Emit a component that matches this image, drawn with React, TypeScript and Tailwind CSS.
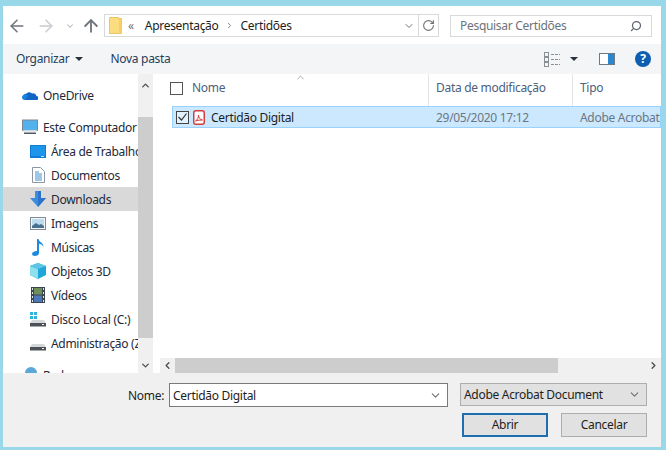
import { ArrowLeft, ArrowRight, ArrowUp, ChevronDown, ChevronLeft, ChevronRight, ChevronUp, RotateCw, Search } from "lucide-react";
import type { ReactNode } from "react";

function FolderIcon() {
  return (
    <svg width="13" height="17" viewBox="0 0 13 17">
      <path d="M0.500 0.500h9l0 1h3v15h-12z" fill="#fbdc7f" stroke="#e9c765" />
      <path d="M10 2h2.500v14.500H10z" fill="#f7cf66" />
    </svg>
  );
}

function CloudIcon() {
  return (
    <svg width="16" height="12" viewBox="0 0 16 12">
      <path d="M3 11h11a2 2 0 0 0 .5-4A3.600 3.600 0 0 0 10 4.500 4 4 0 0 0 4.500 4.500 3.500 3.500 0 0 0 3 11z" fill="#0f66c4" />
      <path d="M1 10.500a3 3 0 0 1 3-5l2 1-3 4.500z" fill="#1a84dc" />
    </svg>
  );
}

function PcIcon() {
  return (
    <svg width="16" height="16" viewBox="0 0 16 16">
      <rect x="0.500" y="1" width="15" height="10.500" fill="#53b1ec" stroke="#7c8894" />
      <rect x="1" y="11" width="14" height="1.500" fill="#cfd7de" />
      <rect x="2" y="13.500" width="12" height="1.500" fill="#4e5963" />
    </svg>
  );
}

function DesktopIcon() {
  return (
    <svg width="16" height="13" viewBox="0 0 16 13">
      <rect width="16" height="13" fill="#0f7dd8" />
      <rect x="1" y="1" width="14" height="10" fill="#1d95ea" />
      <rect x="11" y="11" width="3" height="1" fill="#bfe3fb" />
    </svg>
  );
}

function DocIcon() {
  return (
    <svg width="13" height="16" viewBox="0 0 13 16">
      <path d="M0.500 0.500h8l4 4v11h-12z" fill="#fff" stroke="#8b97a3" />
      <path d="M3 5h4M3 7h7M3 9h7M3 11h7M3 13h7" stroke="#3f8fce" />
    </svg>
  );
}

function DownloadIcon() {
  return (
    <svg width="16" height="16" viewBox="0 0 16 16">
      <path d="M5 0h6v7h5l-8 9-8-9h5z" fill="#3c8ddf" />
      <path d="M8 0h3v7h5l-8 9z" fill="#2b74c7" />
    </svg>
  );
}

function ImageIcon() {
  return (
    <svg width="16" height="13" viewBox="0 0 16 13">
      <rect x="0.500" y="0.500" width="15" height="12" fill="#f4f6f8" stroke="#7e8a96" />
      <rect x="2" y="2" width="12" height="9" fill="#bfdcef" />
      <path d="M2 9l4-3 3 2 2-1 3 2v2H2z" fill="#48708f" />
    </svg>
  );
}

function MusicIcon() {
  return (
    <svg width="12" height="17" viewBox="0 0 12 17">
      <path d="M5 0h1.500c.5 3 5 3.500 5 8-1-2-2.500-3-4.500-3.200V14c0 2-2 3-4 3s-3-1-3-2.200S2 12 5 12z" fill="#1b8be0" />
    </svg>
  );
}

function CubeIcon() {
  return (
    <svg width="16" height="16" viewBox="0 0 16 16">
      <path d="M8 0l8 3v9l-8 4-8-4V3z" fill="#1ea7d8" />
      <path d="M0 3l8 3v10l-8-4z" fill="#8fe0ee" />
      <path d="M0 3l8-3 8 3-8 3z" fill="#5cc6e4" />
    </svg>
  );
}

function VideoIcon() {
  return (
    <svg width="14" height="16" viewBox="0 0 14 16">
      <rect width="14" height="16" fill="#3d4650" />
      <rect x="3" y="1" width="8" height="6.500" fill="#6f8f5a" />
      <rect x="3" y="8.500" width="8" height="6.500" fill="#4a78b8" />
      <path d="M1 1h1v2H1zM1 5h1v2H1zM1 9h1v2H1zM1 13h1v2H1zM12 1h1v2h-1zM12 5h1v2h-1zM12 9h1v2h-1zM12 13h1v2h-1z" fill="#e5e5e5" />
    </svg>
  );
}

function DriveIcon({ windows }: { windows?: boolean }) {
  return (
    <svg width="16" height="16" viewBox="0 0 16 16">
      {windows && <path d="M0 1h3v3H0zM4 1h3v3H4zM0 5h3v3H0zM4 5h3v3H4z" fill="#2fb4dc" />}
      <path d="M2 9h12l2 3H0z" fill="#d5d8da" />
      <rect y="12" width="16" height="3.500" fill="#4c5258" />
      <rect x="12" y="13" width="2" height="1" fill="#eee" />
    </svg>
  );
}

function NetworkIcon() {
  return (
    <svg width="16" height="16" viewBox="0 0 16 16">
      <circle cx="9" cy="6" r="6" fill="#5aa7d8" />
      <rect y="9" width="16" height="6" fill="#6d7780" />
    </svg>
  );
}

function PdfIcon() {
  return (
    <svg width="12" height="15" viewBox="0 0 12 15" fill="none">
      <rect x="0.750" y="0.750" width="10.500" height="13.500" rx="2" fill="#fff" stroke="#d04040" strokeWidth="1.500" />
      <path d="M2.500 11c2-1 3-3.500 3-6 0 2.500 1.500 4.500 4 5-2.500 0-4.800.200-7 1z" stroke="#d04040" />
    </svg>
  );
}

function ViewsIcon() {
  return (
    <svg width="16" height="15" viewBox="0 0 16 15" fill="none">
      <rect x="0.500" y="0.500" width="4" height="4" stroke="#8a8f94" />
      <rect x="0.500" y="5.500" width="4" height="4" stroke="#8a8f94" />
      <rect x="0.500" y="10.500" width="4" height="4" stroke="#8a8f94" />
      <path d="M7 2.500h9M7 7.500h9M7 12.500h9" stroke="#8a8f94" strokeDasharray="3 1" />
    </svg>
  );
}

function PaneIcon() {
  return (
    <svg width="16" height="12" viewBox="0 0 16 12">
      <rect x="0.500" y="0.500" width="15" height="11" fill="#fff" stroke="#6c7a86" />
      <rect x="9" y="1" width="6" height="10" fill="#2d87cf" />
    </svg>
  );
}

function Caret() {
  return <span className="block h-0 w-0 border-x-[4px] border-t-[4px] border-x-transparent border-t-[#26313c]" />;
}

function NavItem({ icon, label, child, active, className = "" }: { icon: ReactNode; label: string; child?: boolean; active?: boolean; className?: string }) {
  return (
    <div className={`flex h-6 shrink-0 items-center whitespace-nowrap ${child ? "pl-[27px]" : "pl-[19px]"} ${active ? "bg-[#d9d9d9]" : ""} ${className}`}>
      <span className="mr-[5px] flex h-4 w-4 shrink-0 items-center justify-center">{icon}</span>
      <span className="pt-[1px]">{label}</span>
    </div>
  );
}

function ColumnHead({ label, className }: { label: string; className: string }) {
  return <div className={`flex h-[32px] items-center border-r border-[#e5e5e5] pb-[4px] pl-[7px] text-[#4c607a] ${className}`}>{label}</div>;
}

export default function App() {
  return (
    <div className="flex h-[450px] w-[666px] flex-col overflow-hidden border-b-[3px] border-l-[3px] border-r-[5px] border-t-[6px] border-[#99d8e8] bg-white text-[12px] leading-none tracking-[-0.3px] text-[#1e1e1e] [font-family:'Noto_Sans',sans-serif]">
      <div className="flex h-[38px] shrink-0 items-center pl-[4px] pr-[9px] pt-[1px]">
        <ArrowLeft size={20} strokeWidth={1.800} className="text-[#6d7378]" />
        <ArrowRight size={20} strokeWidth={1.800} className="ml-[9px] text-[#c8ccd0]" />
        <ChevronDown size={10} strokeWidth={2.500} className="ml-[9px] text-[#b0b4b8]" />
        <ArrowUp size={20} strokeWidth={2.200} className="ml-[6px] text-[#6d7378]" />
        <div className="ml-[3px] flex h-[23px] w-[335px] items-center border border-[#d9d9d9] pl-[4px]">
          <FolderIcon />
          <span className="ml-[6px] text-[#6d7378]">«</span>
          <span className="ml-[11px]">Apresentação</span>
          <ChevronRight size={9} strokeWidth={2.500} className="ml-[6px] text-[#7d8287]" />
          <span className="ml-[7px]">Certidões</span>
          <div className="ml-auto flex h-full items-center">
            <ChevronDown size={12} strokeWidth={2} className="mr-[3px] text-[#6d7378]" />
            <div className="flex h-full w-[20px] items-center justify-center border-l border-[#d9d9d9]">
              <RotateCw size={13} className="text-[#6d7378]" />
            </div>
          </div>
        </div>
        <div className="ml-auto flex h-[22px] w-[202px] items-center justify-between border border-[#d9d9d9] pl-[9px] pr-[9px] text-[#6d7378]">
          <span>Pesquisar Certidões</span>
          <Search size={12} strokeWidth={2.500} className="-scale-x-100 text-[#5c6670]" />
        </div>
      </div>

      <div className="flex h-[30px] shrink-0 items-center bg-[#f4f5f6] pl-[13px] pr-[10px] text-[#26405c]">
        <span>Organizar</span>
        <span className="ml-[6px] flex"><Caret /></span>
        <span className="ml-[27px]">Nova pasta</span>
        <div className="ml-auto flex items-center">
          <ViewsIcon />
          <span className="ml-[10px] flex"><Caret /></span>
          <span className="ml-[21px] flex"><PaneIcon /></span>
          <span className="ml-[20px] flex h-4 w-4 items-center justify-center rounded-full bg-[#0e5fb0] text-[12px] font-bold text-white">?</span>
        </div>
      </div>

      <div className="flex min-h-0 flex-1">
        <div className="flex w-[135px] shrink-0 flex-col overflow-hidden pt-[9px] text-[#1e2a38]">
          <NavItem icon={<CloudIcon />} label="OneDrive" />
          <NavItem className="mt-2" icon={<PcIcon />} label="Este Computador" />
          <NavItem child icon={<DesktopIcon />} label="Área de Trabalho" />
          <NavItem child icon={<DocIcon />} label="Documentos" />
          <NavItem child active icon={<DownloadIcon />} label="Downloads" />
          <NavItem child icon={<ImageIcon />} label="Imagens" />
          <NavItem child icon={<MusicIcon />} label="Músicas" />
          <NavItem child icon={<CubeIcon />} label="Objetos 3D" />
          <NavItem child icon={<VideoIcon />} label="Vídeos" />
          <NavItem child icon={<DriveIcon windows />} label="Disco Local (C:)" />
          <NavItem child icon={<DriveIcon />} label="Administração (Z:)" />
          <NavItem className="mt-2" icon={<NetworkIcon />} label="Rede" />
        </div>

        <div className="flex w-[15px] shrink-0 flex-col bg-[#f0f0f0]">
          <div className="flex h-[27px] items-start justify-center pt-[6px]"><ChevronUp size={11} strokeWidth={3} className="text-[#505050]" /></div>
          <div className="h-[16px]" />
          <div className="h-[221px] bg-[#cdcdcd]" />
          <div className="flex flex-1 items-end justify-center pb-[2px]"><ChevronDown size={11} strokeWidth={3} className="text-[#505050]" /></div>
        </div>

        <div className="relative flex min-w-0 flex-1 flex-col pl-[6px]">
          <ChevronUp size={11} strokeWidth={1.500} className="absolute left-[142px] top-[-2px] text-[#7d8287]" />
          <div className="flex shrink-0">
            <div className="flex h-[32px] w-[270px] items-center border-r border-[#e5e5e5] pb-[4px] pl-[11px] text-[#4c607a]">
              <span className="h-[13px] w-[13px] border border-[#555]" />
              <span className="ml-[9px]">Nome</span>
            </div>
            <ColumnHead label="Data de modificação" className="w-[144px]" />
            <ColumnHead label="Tipo" className="flex-1 border-r-0" />
          </div>
          <div className="ml-[13px] flex h-[22px] shrink-0 items-center overflow-hidden whitespace-nowrap border border-[#99d1ff] bg-[#cce8ff]">
            <span className="ml-[3px] flex h-[13px] w-[13px] shrink-0 items-center justify-center border border-[#444] bg-white/40">
              <svg width="9" height="8" viewBox="0 0 9 8" fill="none"><path d="M0.500 4l3 3 5-6.500" stroke="#333" strokeWidth="1.200" /></svg>
            </span>
            <span className="ml-[4px] flex shrink-0"><PdfIcon /></span>
            <span className="ml-[6px] w-[225px] shrink-0 pt-[1px]">Certidão Digital</span>
            <span className="w-[144px] shrink-0 pt-[1px] text-[#6b7680]">29/05/2020 17:12</span>
            <span className="pt-[1px] text-[#6b7680]">Adobe Acrobat Document</span>
          </div>
          <div className="flex-1" />
          <div className="ml-[1px] flex h-[15px] shrink-0 items-center bg-[#f0f0f0]">
            <span className="flex w-[15px] justify-center"><ChevronLeft size={11} strokeWidth={3} className="text-[#505050]" /></span>
            <div className="h-full w-[383px] bg-[#cdcdcd]" />
            <span className="ml-auto flex w-[15px] justify-center"><ChevronRight size={11} strokeWidth={3} className="text-[#505050]" /></span>
          </div>
        </div>
      </div>

      <div className="flex h-[74px] shrink-0 flex-col bg-[#f0f0f0] pr-[14px] pt-[10px]">
        <div className="flex h-[24px] items-center">
          <span className="ml-[125px] w-[41px] pt-[1px]">Nome:</span>
          <div className="flex h-[24px] w-[279px] items-center justify-between border border-[#7a7a7a] bg-white pl-[3px] pr-[5px]">
            <span className="pt-[1px]">Certidão Digital</span>
            <ChevronDown size={13} className="text-[#6d7378]" />
          </div>
          <div className="ml-[12px] flex h-[23px] w-[187px] items-center justify-between self-start border border-[#adadad] bg-[#e1e1e1] pl-[3px] pr-[5px]">
            <span className="pt-[1px]">Adobe Acrobat Document</span>
            <ChevronDown size={13} className="text-[#6d7378]" />
          </div>
        </div>
        <div className="mt-[6px] flex justify-end gap-[13px]">
          <button className="h-[24px] w-[86px] border-2 border-[#1f6fb0] bg-[#e1e1e1]">Abrir</button>
          <button className="h-[24px] w-[86px] border border-[#adadad] bg-[#e1e1e1]">Cancelar</button>
        </div>
      </div>
    </div>
  );
}
